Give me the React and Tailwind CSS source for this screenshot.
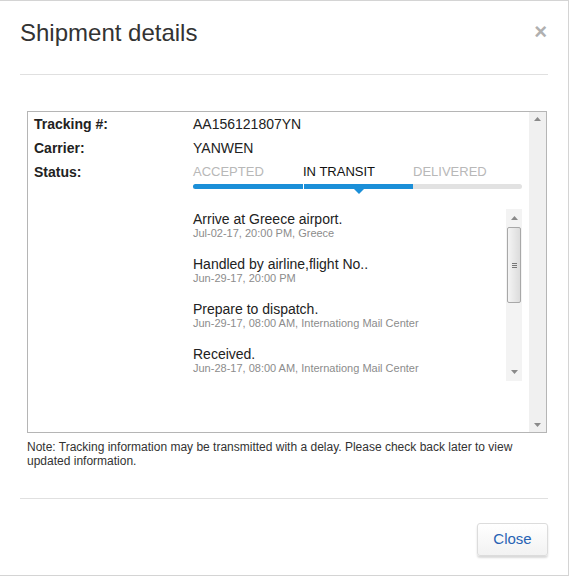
import React from "react";

const events = [
  { title: "Arrive at Greece airport.", info: "Jul-02-17, 20:00 PM, Greece" },
  { title: "Handled by airline,flight No..", info: "Jun-29-17, 20:00 PM" },
  { title: "Prepare to dispatch.", info: "Jun-29-17, 08:00 AM, Internationg Mail Center" },
  { title: "Received.", info: "Jun-28-17, 08:00 AM, Internationg Mail Center" },
];

// small scrollbar arrow (classic windows look)
function Arrow({ down }) {
  return (
    <svg width="7" height="4" viewBox="0 0 7 4" className="block">
      {down ? <path d="M0 0h7L3.5 4z" fill="#8a8a8a" /> : <path d="M0 4h7L3.5 0z" fill="#8a8a8a" />}
    </svg>
  );
}

function Row({ label, children }) {
  return (
    <div className="flex h-6 items-center">
      <div className="w-[159px] shrink-0 font-bold text-[14px] text-[#222]">{label}</div>
      <div className="flex-1 text-[14px] text-[#222]">{children}</div>
    </div>
  );
}

export default function App() {
  return (
    <div className="w-[570px] h-[577px] bg-white font-['Liberation_Sans',Arial,sans-serif] text-[#333]">
      <div className="w-[569px] h-[576px] border-t border-r border-b border-[#d4d4d4] flex flex-col">
        {/* Header */}
        <div className="flex items-start justify-between pl-5 pr-[21px] pt-[17px] h-[73px]">
          <h1 className="text-[24px] leading-[30px] text-[#333]">Shipment details</h1>
          <span className="mt-[2px] text-[22px] leading-[24px] font-bold text-[#b0b0b0]">×</span>
        </div>
        <div className="mx-5 border-t border-[#e0e0e0]" />

        {/* Body */}
        <div className="pl-[27px] pr-[21px] pt-[36px]">
          <div className="flex h-[322px] border border-[#b5b5b5]">
            <div className="flex-1 pl-[6px]">
              <Row label="Tracking #:">AA156121807YN</Row>
              <Row label="Carrier:">YANWEN</Row>
              <div className="flex">
                <div className="w-[159px] shrink-0 h-6 flex items-center font-bold text-[14px] text-[#222]">Status:</div>
                <div className="w-[330px]">
                  {/* Stepper */}
                  <div className="grid grid-cols-3 h-6 items-center text-[13px]">
                    <span className="text-[#b8b8b8]">ACCEPTED</span>
                    <span className="text-[#111]">IN TRANSIT</span>
                    <span className="text-[#b8b8b8]">DELIVERED</span>
                  </div>
                  <div className="relative w-[329px] h-[5px] rounded-full bg-[#e2e2e2] flex">
                    <div className="w-[110px] h-full bg-[#1b8fd8] rounded-l-full" />
                    <div className="w-px h-full bg-white" />
                    <div className="w-[109px] h-full bg-[#1b8fd8]" />
                    <div className="absolute left-[161px] top-[5px] w-0 h-0 border-l-[5px] border-r-[5px] border-t-[5px] border-l-transparent border-r-transparent border-t-[#1b8fd8]" />
                  </div>

                  {/* Events list */}
                  <div className="mt-[20px] flex w-[329px] h-[172px]">
                    <div className="flex-1 pt-[2px]">
                      {events.map((e) => (
                        <div key={e.title} className="h-[45px]">
                          <div className="text-[14px] leading-[16px] text-[#222]">{e.title}</div>
                          <div className="text-[11px] leading-[13px] text-[#8c8c8c]">{e.info}</div>
                        </div>
                      ))}
                    </div>
                    <div className="w-[16px] bg-[#f3f3f3] flex flex-col items-center">
                      <div className="h-[18px] flex items-center justify-center"><Arrow /></div>
                      <div className="w-[14px] h-[76px] border border-[#a8a8a8] rounded-[2px] bg-gradient-to-r from-[#f4f4f4] to-[#dcdcdc] flex flex-col items-center justify-center gap-[1px]">
                        <div className="w-[5px] h-px bg-[#777]" />
                        <div className="w-[5px] h-px bg-[#777]" />
                        <div className="w-[5px] h-px bg-[#777]" />
                      </div>
                      <div className="flex-1" />
                      <div className="h-[18px] flex items-center justify-center"><Arrow down /></div>
                    </div>
                  </div>
                </div>
              </div>
            </div>
            {/* outer scrollbar */}
            <div className="w-[17px] bg-[#f0f0f0] flex flex-col items-center justify-between py-[5px]">
              <Arrow />
              <Arrow down />
            </div>
          </div>
          <p className="mt-[7px] text-[12px] leading-[14px] text-[#333]">
            Note: Tracking information may be transmitted with a delay. Please check back later to view updated information.
          </p>
        </div>

        <div className="mx-5 mt-[30px] border-t border-[#e0e0e0]" />

        {/* Footer */}
        <div className="flex justify-end pr-[20px] pt-[24px]">
          <button className="w-[71px] h-[33px] rounded-[3px] border border-[#dcdcdc] bg-gradient-to-b from-white to-[#f2f2f2] shadow-[0_2px_2px_rgba(0,0,0,0.15)] text-[15px] text-[#2763b4]">
            Close
          </button>
        </div>
      </div>
    </div>
  );
}
